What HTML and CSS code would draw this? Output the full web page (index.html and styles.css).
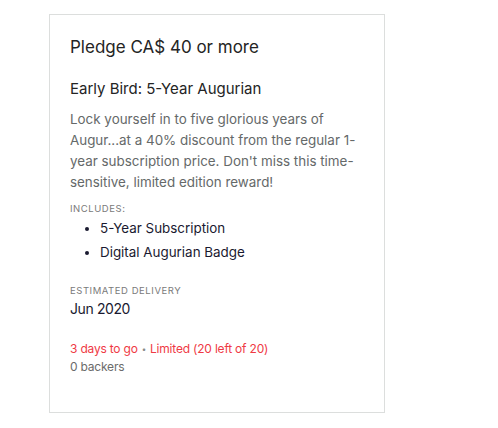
FILE: index.html
```html
<!DOCTYPE html>
<html>
<head>
<meta charset="utf-8">
<link rel="stylesheet" href="styles.css">
</head>
<body>
<div class="page">
  <div class="card">
    <h2 class="pledge">Pledge CA$ 40 or more</h2>
    <h3 class="reward-title">Early Bird: 5-Year Augurian</h3>
    <p class="desc">Lock yourself in to five glorious years of Augur...at a 40% discount from the regular 1-year subscription price. Don't miss this time-sensitive, limited edition reward!</p>
    <div class="label">Includes:</div>
    <ul class="items">
      <li>5-Year Subscription</li>
      <li>Digital Augurian Badge</li>
    </ul>
    <div class="label label-delivery">Estimated delivery</div>
    <div class="delivery">Jun 2020</div>
    <div class="status"><span class="red">3 days to go</span><span class="dot">•</span><span class="red">Limited (20 left of 20)</span></div>
    <div class="backers">0 backers</div>
  </div>
</div>
</body>
</html>
```
FILE: styles.css
```css
* { box-sizing: border-box; }
html, body { margin: 0; padding: 0; background: #fff; }
body { font-family: Inter, "Noto Sans", sans-serif; }
.page { padding: 14px 0 0 49px; }
.card {
  width: 336px;
  height: 399px;
  border: 1px solid #dcdedd;
  padding: 20px 20px 0 20px;
}
.pledge {
  margin: 0;
  font-size: 17px;
  line-height: 24px;
  font-weight: 400;
  color: #242424;
}
.reward-title {
  margin: 18px 0 0;
  font-size: 15px;
  line-height: 24px;
  font-weight: 400;
  color: #242424;
}
.desc {
  margin: 8px 0 0;
  font-size: 13.4px;
  line-height: 21px;
  color: #656969;
}
.label {
  margin-top: 9px;
  font-size: 9.5px;
  line-height: 14px;
  letter-spacing: 0.55px;
  text-transform: uppercase;
  color: #7a7a7a;
}
.items {
  margin: 0;
  padding-left: 30px;
  font-size: 13.4px;
  line-height: 24px;
  color: #1a1a30;
}
.label-delivery { margin-top: 20px; }
.delivery {
  font-size: 14px;
  line-height: 22px;
  letter-spacing: -0.4px;
  color: #1a1a30;
}
.status {
  margin-top: 20px;
  font-size: 12px;
  line-height: 18px;
  letter-spacing: -0.2px;
  color: #7a7a7a;
}
.red { color: #ef3a45; }
.dot { font-size: 8px; margin: 0 4px; vertical-align: 1px; color: #8a8a8a; }
.backers {
  font-size: 12px;
  line-height: 17px;
  letter-spacing: -0.2px;
  color: #6b6b6b;
}
```
